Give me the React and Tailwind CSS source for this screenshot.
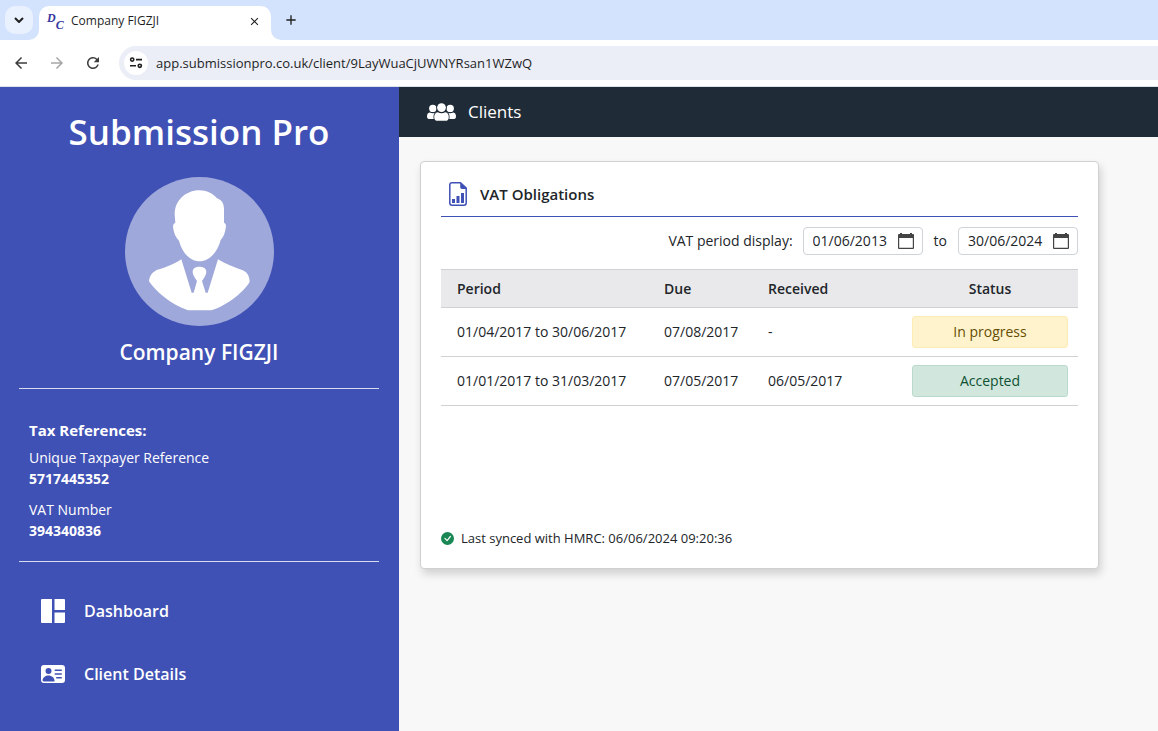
import React, { useState } from "react";
import { MdArrowBack, MdArrowForward, MdRefresh, MdClose, MdAdd } from "react-icons/md";
import { BsPersonVcardFill, BsCheckCircleFill } from "react-icons/bs";

const obligations = [
  { period: "01/04/2017 to 30/06/2017", due: "07/08/2017", received: "-", status: "In progress" },
  { period: "01/01/2017 to 31/03/2017", due: "07/05/2017", received: "06/05/2017", status: "Accepted" },
];

const statusStyles = {
  "In progress": "border-[#ffecb5] bg-[#fff3cd] text-[#664d03]",
  Accepted: "border-[#badbcc] bg-[#d1e7dd] text-[#0f5132]",
};

function BrowserChrome() {
  return (
    <header className="bg-[#d3e3fd] text-[#1f1f1f]">
      {/* Tab strip */}
      <div className="flex h-10 items-end">
        <button
          aria-label="Search tabs"
          className="mb-1.5 ml-[5px] flex size-7 items-center justify-center rounded-[10px] bg-[#e9f1fe]"
        >
          <svg width="10" height="6" viewBox="0 0 10 6" fill="none" stroke="currentColor" strokeWidth="2">
            <path d="M1 1l4 4 4-4" />
          </svg>
        </button>
        <div className="relative ml-1.5 flex h-[34px] w-[232px] items-center rounded-t-[10px] bg-white pr-2.5 pb-1 pl-2">
          {/* Curved feet of the active tab */}
          <svg className="absolute bottom-0 -left-2.5" width="10" height="10" viewBox="0 0 10 10" fill="#fff">
            <path d="M10 0v10H0A10 10 0 0 0 10 0z" />
          </svg>
          <svg className="absolute -right-2.5 bottom-0" width="10" height="10" viewBox="0 0 10 10" fill="#fff">
            <path d="M0 0v10h10A10 10 0 0 1 0 0z" />
          </svg>
          <span
            className="flex h-[17px] w-4 justify-between font-['Liberation_Serif',serif] text-[12px] leading-[10px] font-bold text-[#3539a0] italic"
            aria-hidden="true"
          >
            <span>D</span>
            <span className="self-end">C</span>
          </span>
          <span className="ml-2 flex-1 text-xs">Company FIGZJI</span>
          <button aria-label="Close tab">
            <MdClose size={13} />
          </button>
        </div>
        <button aria-label="New tab" className="mb-3 ml-3">
          <MdAdd size={16} />
        </button>
      </div>

      {/* Toolbar */}
      <div className="flex h-[47px] items-center border-b border-[#dde1e8] bg-white pl-3">
        <button aria-label="Back" className="text-[#3c3c3c]">
          <MdArrowBack size={18} />
        </button>
        <button aria-label="Forward" className="ml-[18px] text-[#a6a6a6]">
          <MdArrowForward size={18} />
        </button>
        <button aria-label="Reload" className="ml-[18px] text-[#3c3c3c]">
          <MdRefresh size={18} />
        </button>
        <div className="ml-[17px] flex h-[34px] flex-1 items-center rounded-l-full bg-[#ebeef7] pl-[5px]">
          <button aria-label="Site information" className="flex size-6 items-center justify-center rounded-full bg-white">
            <svg width="14" height="14" viewBox="0 0 14 14" fill="none" stroke="currentColor" strokeWidth="1.6">
              <circle cx="3.2" cy="3.6" r="1.6" />
              <path d="M7 3.6h6M1 9.8h6" />
              <circle cx="10.8" cy="9.8" r="1.6" />
            </svg>
          </button>
          <input
            aria-label="Address"
            readOnly
            value="app.submissionpro.co.uk/client/9LayWuaCjUWNYRsan1WZwQ"
            className="ml-2 h-6 min-w-0 flex-1 bg-transparent text-[13px] outline-none"
          />
        </div>
      </div>
    </header>
  );
}

function Avatar() {
  return (
    <svg className="mx-auto size-[149px]" viewBox="75 36 447 447" aria-hidden="true">
      <circle cx="298.5" cy="259.5" r="223.5" fill="#9fa8da" />
      <g fill="#fff">
        <path d="M298 76c22 0 41 9 53 24 15 6 21 16 21 33v40c6 3 7 8 5 17-2 13-6 27-15 35-9 36-34 64-63 64-30 0-53-27-62-62-9-9-15-21-17-35-2-10-1-15 6-19l-2-25c0-40 32-72 74-72z" />
        <path d="M244 283L275 383H281L291 348C283 336 277 328 278 318C280 308 288 305 298 305C308 305 317 308 319 318C320 328 313 338 306 348L317 383H323L354 283C376 297 402 307 426 315C441 320 448 332 449 350C436 375 386 420 334 436H264C213 419 166 378 147 349C149 331 157 322 170 315C198 307 220 299 244 283Z" />
      </g>
    </svg>
  );
}

function DashboardIcon() {
  return (
    <svg className="w-6" viewBox="0 0 24 24" fill="currentColor" aria-hidden="true">
      <path d="M1 0h10v24H1a1 1 0 0 1-1-1V1a1 1 0 0 1 1-1zM13.500 0H23a1 1 0 0 1 1 1v10H13.500zM13.500 13.500H24V23a1 1 0 0 1-1 1h-9.500z" />
    </svg>
  );
}

function Sidebar() {
  return (
    <aside className="w-[399px] shrink-0 bg-[#3f51b5] pr-5 pl-[19px] text-white">
      <h1 className="pt-5 text-center text-[35px] leading-[50px] font-semibold">Submission Pro</h1>
      <div className="mt-5">
        <Avatar />
      </div>
      <h2 className="mt-2.5 text-center text-[21px] leading-8 font-semibold">Company FIGZJI</h2>

      <section className="mt-5 border-y border-white/80 px-2.5 pt-[31px] pb-5 text-sm leading-[21px]">
        <h3 className="text-[15px] font-bold">Tax References:</h3>
        <dl>
          <dt className="mt-1.5">Unique Taxpayer Reference</dt>
          <dd className="font-bold">5717445352</dd>
          <dt className="mt-2.5">VAT Number</dt>
          <dd className="font-bold">394340836</dd>
        </dl>
      </section>

      <nav className="mt-[37px] flex flex-col gap-[39px] pl-[22px] text-base leading-6 font-semibold">
        <a href="#dashboard" className="flex items-center gap-[19px]">
          <DashboardIcon />
          Dashboard
        </a>
        <a href="#client-details" className="flex items-center gap-[19px]">
          <BsPersonVcardFill size={24} />
          Client Details
        </a>
      </nav>
    </aside>
  );
}

function ClientsIcon() {
  return (
    <svg width="29" height="18" viewBox="0 0 29 18" fill="currentColor" aria-hidden="true">
      <circle cx="5.800" cy="5.400" r="3.700" />
      <circle cx="23.200" cy="5.400" r="3.700" />
      <path d="M2.600 9.600c2 1 4.400 1 6.400 0V16H3.200C1 16 0 15.200 0 13.400c0-2 .8-3.600 2.600-3.800zM26.400 9.600c-2 1-4.400 1-6.400 0V16h5.800c2.200 0 3.200-.8 3.200-2.600 0-2-.8-3.600-2.600-3.800z" />
      {/* Front figure, cut out of the two behind it */}
      <g stroke="#1f2b36" strokeWidth="1.600" paintOrder="stroke">
        <path d="M10.800 9.200c2.400 1.300 5 1.300 7.400 0 2.600.2 3.600 2.500 3.600 5 0 2.500-1.200 3.600-3.600 3.600h-7.400c-2.400 0-3.600-1.100-3.600-3.600 0-2.500 1-4.800 3.600-5z" />
        <circle cx="14.500" cy="4.600" r="4.400" />
      </g>
    </svg>
  );
}

function ReportIcon() {
  return (
    <svg width="18" height="24" viewBox="0 0 18 24" fill="none" aria-hidden="true">
      <path d="M3 .8h8.500L17.200 6v15a2.200 2.200 0 0 1-2.200 2.200H3A2.200 2.200 0 0 1 .8 21V3A2.200 2.200 0 0 1 3 .8z" stroke="#3f51b5" strokeWidth="1.500" />
      <path d="M11.200.5 18 7h-5a1.800 1.800 0 0 1-1.800-1.800zM3 17h3v4H3zM7.500 14h3v7h-3zM12 11h3v10h-3z" fill="#3f51b5" />
    </svg>
  );
}

function DateField({ id, defaultValue }) {
  const [value, setValue] = useState(defaultValue);

  return (
    <div className="flex h-7 w-[120px] items-center rounded border border-[#ced4da] bg-white pr-2 pl-[9px]">
      <input
        id={id}
        value={value}
        onChange={(e) => setValue(e.target.value)}
        className="min-w-0 flex-1 text-sm outline-none"
      />
      <button aria-label="Open calendar">
        <svg width="16" height="17" viewBox="0 0 16 17" fill="#444">
          <path d="M2 0h2v1h8V0h2v1h1a1 1 0 0 1 1 1v13a1 1 0 0 1-1 1H1a1 1 0 0 1-1-1V2a1 1 0 0 1 1-1h1zM1.200 5v9.800h13.600V5z" fillRule="evenodd" />
        </svg>
      </button>
    </div>
  );
}

function ObligationsCard() {
  return (
    <section className="rounded border border-[#ced0d2] bg-white px-5 pb-5 shadow-[2px_5px_8px_rgba(0,0,0,0.16)]">
      <div className="flex h-[55px] items-center gap-[13px] border-b border-[#3f51b5] pt-2.5 pl-2">
        <ReportIcon />
        <h2 className="text-[15px] leading-6 font-semibold">VAT Obligations</h2>
      </div>

      <div className="flex items-center justify-end py-2.5 text-sm">
        <label htmlFor="period-from" className="mr-2.5">VAT period display:</label>
        <DateField id="period-from" defaultValue="01/06/2013" />
        <label htmlFor="period-to" className="mx-[11px]">to</label>
        <DateField id="period-to" defaultValue="30/06/2024" />
      </div>

      <table className="mt-1 w-full table-fixed text-left text-sm">
        <thead>
          <tr className="h-[38px] border-y border-[#d0d1d3] bg-[#e9e9eb]">
            <th className="pl-4 font-semibold">Period</th>
            <th className="w-[104px] pl-2 font-semibold">Due</th>
            <th className="w-[142px] pl-2 font-semibold">Received</th>
            <th className="w-[176px] text-center font-semibold">Status</th>
          </tr>
        </thead>
        <tbody>
          {obligations.map((row) => (
            <tr key={row.period} className="border-b border-[#d0d1d3]">
              <td className="pl-4">{row.period}</td>
              <td className="pl-2">{row.due}</td>
              <td className="pl-2">{row.received}</td>
              <td className="px-2.5 py-2">
                <span className={`block rounded-[3px] border py-[5px] text-center leading-5 ${statusStyles[row.status]}`}>
                  {row.status}
                </span>
              </td>
            </tr>
          ))}
        </tbody>
      </table>

      <p className="mt-[122px] flex items-center gap-[7px] text-[13px] leading-5">
        <BsCheckCircleFill size={13} className="text-[#198754]" />
        Last synced with HMRC: 06/06/2024 09:20:36
      </p>
    </section>
  );
}

function App() {
  return (
    <div className="flex min-h-screen flex-col bg-[#f8f8f8] font-['Open_Sans',sans-serif] text-[#212529]">
      <BrowserChrome />
      <div className="flex flex-1">
        <Sidebar />
        <div className="min-w-0 flex-1">
          <div className="flex h-[50px] items-center gap-3 bg-[#1f2b36] pl-7 text-white">
            <ClientsIcon />
            <span className="text-[17px]">Clients</span>
          </div>
          <main className="pt-6 pr-[59px] pl-[21px]">
            <ObligationsCard />
          </main>
        </div>
      </div>
    </div>
  );
}

export default App;
